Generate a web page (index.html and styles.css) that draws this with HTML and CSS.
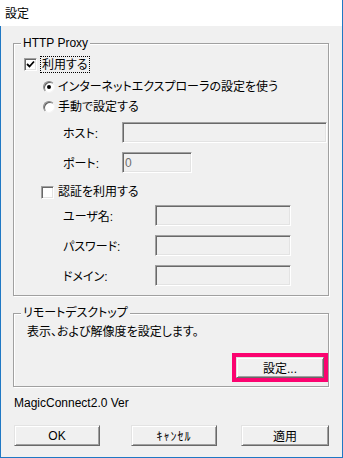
FILE: index.html
```html
<!DOCTYPE html>
<html lang="ja">
<head>
  <meta charset="UTF-8" />
  <title>設定</title>
  <link rel="stylesheet" href="styles.css">
</head>
<body>
  <div class="window">
    <div class="titlebar">設定</div>
    <div class="client">
      <fieldset class="group proxy">
        <legend>HTTP Proxy</legend>
        <div class="row use">
          <span class="check"><svg width="9" height="9" viewBox="0 0 9 9"><polyline points="1,4 3.5,6.5 8,1.5" fill="none" stroke="#000" stroke-width="1.8"/></svg></span>
          <span class="focus">利用する</span>
        </div>
        <div class="row opt first">
          <span class="radio"><span class="dot"></span></span>
          <span class="opt-label">インターネットエクスプローラの設定を使う</span>
        </div>
        <div class="row opt second">
          <span class="radio"></span>
          <span class="opt-label">手動で設定する</span>
        </div>
        <div class="row field host">
          <span class="field-label short">ホスト:</span>
          <input class="input wide" type="text" disabled>
        </div>
        <div class="row field port">
          <span class="field-label short">ポート:</span>
          <input class="input narrow" type="text" value="0" disabled>
        </div>
        <div class="row auth">
          <span class="check"></span>
          <span class="opt-label">認証を利用する</span>
        </div>
        <div class="row field user">
          <span class="field-label long">ユーザ名:</span>
          <input class="input mid" type="text" disabled>
        </div>
        <div class="row field next">
          <span class="field-label long">パスワード:</span>
          <input class="input mid" type="password" disabled>
        </div>
        <div class="row field next">
          <span class="field-label long">ドメイン:</span>
          <input class="input mid" type="text" disabled>
        </div>
      </fieldset>

      <fieldset class="group remote">
        <legend>リモートデスクトップ</legend>
        <p class="desc">表示、および解像度を設定します。</p>
        <div class="actions">
          <button class="btn marked" type="button">設定...</button>
        </div>
      </fieldset>

      <p class="ver">MagicConnect2.0 Ver</p>

      <div class="buttons">
        <button class="btn" type="button">OK</button>
        <button class="btn cancel" type="button">ｷｬﾝｾﾙ</button>
        <button class="btn apply" type="button">適用</button>
      </div>
    </div>
  </div>
</body>
</html>
```

FILE: styles.css
```css
body {
  margin: 0;
  font-family: "Liberation Sans", "Noto Sans CJK JP", sans-serif;
  font-size: 12px;
  font-feature-settings: "palt";
  color: #000;
  background: #fff;
}
.window {
  width: 343px;
  height: 458px;
  box-sizing: border-box;
  border-right: 1px solid #1f78c4;
}
.titlebar {
  height: 26px;
  line-height: 26px;
  padding-left: 5px;
  padding-top: 1px;
  box-sizing: border-box;
  background: #fff;
}
.client {
  height: 432px;
  box-sizing: border-box;
  border-left: 1px solid #1f78c4;
  border-bottom: 1px solid #1f78c4;
  background: #f0f0f0;
  padding: 11px 13px 0 12px;
}

/* group boxes */
.group {
  margin: 0;
  padding: 0 0 9px 0;
  min-width: 0;
  border: 1px solid #a0a0a0;
  box-shadow: 1px 1px 0 #fff, inset 1px 1px 0 #fff;
}
.group legend {
  margin-left: 7px;
  padding: 0 2px;
  line-height: 13px;
  background: #f0f0f0;
}
.remote {
  margin-top: 11px;
  padding-bottom: 8px;
}

.row {
  display: flex;
  align-items: center;
}
.use { height: 18px; margin: 5px 0 0 10px; }
.opt { height: 18px; margin-left: 29px; }
.opt.first { margin-top: 5px; }
.opt.second { margin-top: 2px; }
.field { height: 21px; margin-left: 49px; }
.host { margin-top: 6px; }
.port { margin-top: 9px; }
.auth { height: 18px; margin: 10px 0 0 27px; }
.user { margin-top: 4px; }
.next { margin-top: 9px; }

/* checkbox / radio */
.check {
  width: 13px;
  height: 13px;
  box-sizing: border-box;
  border: 1px solid;
  border-color: #a0a0a0 #fff #fff #a0a0a0;
  box-shadow: inset 1px 1px 0 #696969, inset -1px -1px 0 #e3e3e3;
  background: #fff;
  display: flex;
  align-items: center;
  justify-content: center;
  margin-right: 4px;
}
.radio {
  width: 12px;
  height: 12px;
  box-sizing: border-box;
  border-radius: 50%;
  border: 1px solid;
  border-color: #8a8a8a #f4f4f4 #f4f4f4 #8a8a8a;
  box-shadow: inset 1px 1px 0 #5f5f5f;
  background: #fff;
  display: flex;
  align-items: center;
  justify-content: center;
  margin-right: 3px;
}
.dot {
  width: 4px;
  height: 4px;
  border-radius: 50%;
  background: #000;
}
.focus {
  outline: 1px dotted #000;
  padding: 1px 1px 0;
  line-height: 14px;
}
.opt-label { line-height: 14px; }

/* text fields */
.field-label.short { width: 59px; }
.field-label.long { width: 92px; }
.input {
  height: 21px;
  box-sizing: border-box;
  margin: 0;
  padding: 0 2px;
  font: inherit;
  color: #6d6d6d;
  background: #f0f0f0;
  border: 1px solid;
  border-color: #a0a0a0 #fff #fff #a0a0a0;
  box-shadow: inset 1px 1px 0 #696969, inset -1px -1px 0 #e3e3e3;
}
.input.wide { width: 205px; }
.input.narrow { width: 70px; }
.input.mid { width: 136px; }

/* remote desktop */
.desc {
  margin: 5px 0 0 13px;
  line-height: 14px;
}
.actions {
  display: flex;
  justify-content: flex-end;
  margin-top: 18px;
  padding-right: 4px;
}

/* buttons */
.btn {
  width: 88px;
  height: 21px;
  box-sizing: border-box;
  padding: 0;
  font: inherit;
  color: #000;
  background: #f0f0f0;
  border: 1px solid;
  border-color: #e3e3e3 #696969 #696969 #e3e3e3;
  box-shadow: inset 1px 1px 0 #fff, inset -1px -1px 0 #a0a0a0;
}
.btn.marked {
  outline: 4px solid #fb0470;
}
.ver {
  margin: 9px 0 0 1px;
  line-height: 14px;
}
.buttons {
  display: flex;
  margin-top: 15px;
  padding-left: 1px;
}
.cancel { margin-left: 31px; letter-spacing: 1px; }
.apply { margin-left: 24px; flex-shrink: 0; }
```
